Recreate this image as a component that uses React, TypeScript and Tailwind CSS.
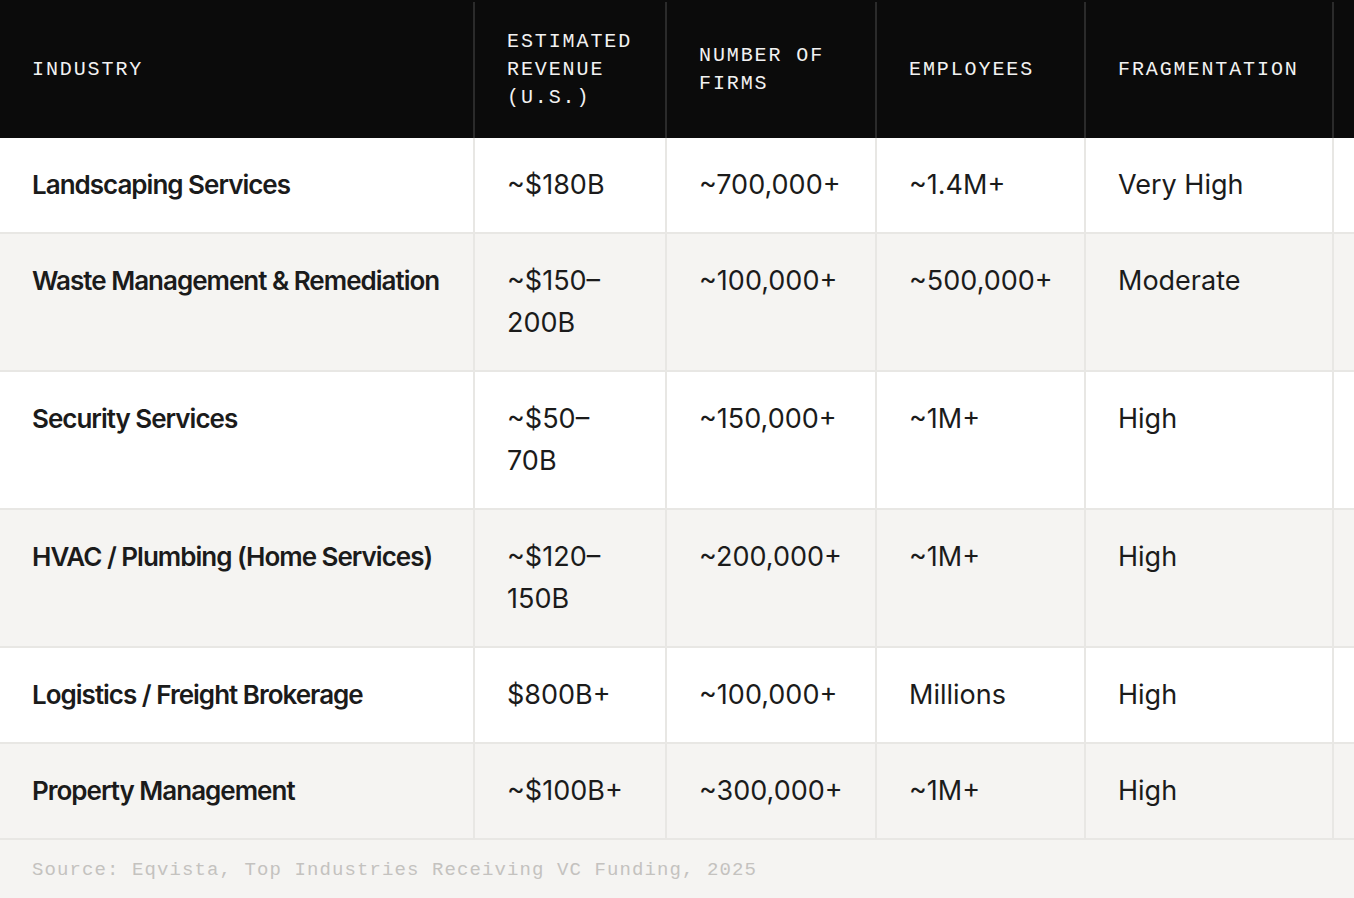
const headers = [
  "Industry",
  "Estimated Revenue (U.S.)",
  "Number of Firms",
  "Employees",
  "Fragmentation",
  "",
];

const rows = [
  ["Landscaping Services", "~$180B", "~700,000+", "~1.4M+", "Very High"],
  ["Waste Management & Remediation", "~$150–200B", "~100,000+", "~500,000+", "Moderate"],
  ["Security Services", "~$50–70B", "~150,000+", "~1M+", "High"],
  ["HVAC / Plumbing (Home Services)", "~$120–150B", "~200,000+", "~1M+", "High"],
  ["Logistics / Freight Brokerage", "$800B+", "~100,000+", "Millions", "High"],
  ["Property Management", "~$100B+", "~300,000+", "~1M+", "High"],
];

const cols = "grid grid-cols-[473px_192px_210px_209px_248px_240px]";
const mono = "font-['Liberation_Mono','DejaVu_Sans_Mono',monospace]";

export default function App() {
  return (
    <div className="w-[1354px] h-[898px] overflow-hidden bg-[#f5f4f2] font-['Inter','Noto_Sans',sans-serif]">
      {/* Header */}
      <div className={`${cols} bg-[#0b0b0b] pt-[2px]`}>
        {headers.map((h, i) => (
          <div
            key={i}
            className={`flex items-center pl-8 pr-6 py-[26px] min-h-[136px] ${mono} text-[20px] leading-[28px] tracking-[1.9px] uppercase text-[#f2f2f2] ${
              i > 0 ? "border-l-2 border-[#2b2b2b]" : ""
            }`}
          >
            {h}
          </div>
        ))}
      </div>

      {/* Body */}
      {rows.map((row, r) => (
        <div
          key={r}
          className={`${cols} border-b-2 border-[#e8e7e4] ${r % 2 === 0 ? "bg-white" : "bg-[#f5f4f2]"}`}
        >
          {[...row, ""].map((cell, i) => (
            <div
              key={i}
              className={`pl-8 py-[26px] leading-[42px] text-[#1b1b1b] ${
                i === 0
                  ? "pr-8 text-[26px] font-semibold tracking-[-1px]"
                  : "pr-7 text-[27px] border-l-2 border-[#e8e7e4]"
              }`}
            >
              {cell}
            </div>
          ))}
        </div>
      ))}

      {/* Footer */}
      <div className={`px-8 py-[19px] ${mono} text-[19px] leading-[22px] tracking-[1.1px] text-[#c4c2bf]`}>
        Source: Eqvista, Top Industries Receiving VC Funding, 2025
      </div>
    </div>
  );
}
